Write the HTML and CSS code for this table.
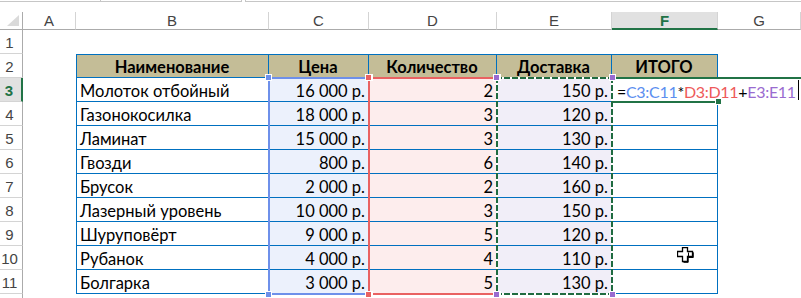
FILE: index.html
```html
<!DOCTYPE html>
<html lang="ru">
<head>
<meta charset="utf-8">
<title>Excel</title>
<link rel="stylesheet" href="styles.css">
</head>
<body>
<div class="sheet">
  <div class="grid">
    <div class="topbar"><div class="namebox"></div><div class="fxbox"></div><div class="formulabox"></div></div>

    <div class="corner"><span class="tri"></span></div>
    <div class="ch">A</div>
    <div class="ch">B</div>
    <div class="ch">C</div>
    <div class="ch">D</div>
    <div class="ch">E</div>
    <div class="ch sel">F</div>
    <div class="ch">G</div>

    <div class="rh">1</div>
    <div class="c"></div><div class="c"></div><div class="c"></div><div class="c"></div><div class="c"></div><div class="c"></div><div class="c"></div>

    <div class="rh">2</div>
    <div class="c"></div>
    <div class="t hd first">Наименование</div>
    <div class="t hd">Цена</div>
    <div class="t hd">Количество</div>
    <div class="t hd">Доставка</div>
    <div class="t hd">ИТОГО</div>
    <div class="c"></div>

    <div class="rh sel">3</div>
    <div class="c"></div>
    <div class="t first">Молоток отбойный</div>
    <div class="t num bc">16 000 р.</div>
    <div class="t num bd">2</div>
    <div class="t num be">150 р.</div>
    <div class="t"></div>
    <div class="c"></div>

    <div class="rh">4</div>
    <div class="c"></div>
    <div class="t first">Газонокосилка</div>
    <div class="t num bc">18 000 р.</div>
    <div class="t num bd">3</div>
    <div class="t num be">120 р.</div>
    <div class="t"></div>
    <div class="c"></div>

    <div class="rh">5</div>
    <div class="c"></div>
    <div class="t first">Ламинат</div>
    <div class="t num bc">15 000 р.</div>
    <div class="t num bd">3</div>
    <div class="t num be">130 р.</div>
    <div class="t"></div>
    <div class="c"></div>

    <div class="rh">6</div>
    <div class="c"></div>
    <div class="t first">Гвозди</div>
    <div class="t num bc">800 р.</div>
    <div class="t num bd">6</div>
    <div class="t num be">140 р.</div>
    <div class="t"></div>
    <div class="c"></div>

    <div class="rh">7</div>
    <div class="c"></div>
    <div class="t first">Брусок</div>
    <div class="t num bc">2 000 р.</div>
    <div class="t num bd">2</div>
    <div class="t num be">160 р.</div>
    <div class="t"></div>
    <div class="c"></div>

    <div class="rh">8</div>
    <div class="c"></div>
    <div class="t first">Лазерный уровень</div>
    <div class="t num bc">10 000 р.</div>
    <div class="t num bd">3</div>
    <div class="t num be">150 р.</div>
    <div class="t"></div>
    <div class="c"></div>

    <div class="rh">9</div>
    <div class="c"></div>
    <div class="t first">Шуруповёрт</div>
    <div class="t num bc">9 000 р.</div>
    <div class="t num bd">5</div>
    <div class="t num be">120 р.</div>
    <div class="t"></div>
    <div class="c"></div>

    <div class="rh">10</div>
    <div class="c"></div>
    <div class="t first">Рубанок</div>
    <div class="t num bc">4 000 р.</div>
    <div class="t num bd">4</div>
    <div class="t num be">110 р.</div>
    <div class="t"></div>
    <div class="c"></div>

    <div class="rh">11</div>
    <div class="c"></div>
    <div class="t first">Болгарка</div>
    <div class="t num bc">3 000 р.</div>
    <div class="t num bd">5</div>
    <div class="t num be">130 р.</div>
    <div class="t"></div>
    <div class="c"></div>

    <div class="rh last"></div>
    <div class="c"></div><div class="c"></div><div class="c"></div><div class="c"></div><div class="c"></div><div class="c"></div><div class="c"></div>
  </div>

  <div class="overlay">
    <div class="editor"><span class="op">=</span><span class="rc">C3:C11</span><span class="op">*</span><span class="rd">D3:D11</span><span class="op">+</span><span class="re">E3:E11</span><span class="caret"></span></div>
    <div class="active"><span class="fill"></span></div>
    <div class="rng rng-c"><span class="h tl"></span><span class="h tr"></span><span class="h bl"></span><span class="h br"></span></div>
    <div class="rng rng-d"><span class="h tl"></span><span class="h tr"></span><span class="h bl"></span><span class="h br"></span></div>
    <div class="rng rng-e"><span class="h tl"></span><span class="h tr"></span><span class="h bl"></span><span class="h br"></span></div>
    <div class="cursorcell">
      <svg class="cursor" width="17" height="16" viewBox="0 0 17 16">
        <path d="M5.5 0.5 H10.5 V4.5 H15.5 V9.5 H10.5 V14.5 H5.5 V9.5 H0.5 V4.5 H5.5 Z" fill="#fff" stroke="#000" stroke-width="1.3"/>
        <path d="M11.5 5.5 V10.5 M6.5 15.3 H11.2 V10.5 H16.3 V5.3" fill="none" stroke="#000" stroke-width="1"/>
      </svg>
    </div>
  </div>
</div>
</body>
</html>
```

FILE: styles.css
```css
* { box-sizing: border-box; }
html, body { margin: 0; padding: 0; background: #fff; }
body {
  width: 801px;
  height: 298px;
  overflow: hidden;
  font-family: "Liberation Sans", Arial, sans-serif;
}
.sheet { position: relative; width: 801px; height: 298px; overflow: hidden; }

.grid, .overlay {
  display: grid;
  grid-template-columns: 23px 53px 193px 100px 128px 115px 106px 83px;
  grid-template-rows: 12px 18px repeat(11, 24px) 4px;
}
.overlay { position: absolute; inset: 0; pointer-events: none; }

/* strip of the formula bar above the sheet */
.topbar { grid-column: 1 / -1; display: flex; align-items: flex-start; }
.namebox { width: 101px; height: 2px; border-right: 1px solid #c6c6c6; border-bottom: 1px solid #c6c6c6; }
.fxbox { width: 141px; height: 2px; border-right: 1px solid #c6c6c6; border-bottom: 1px solid #c6c6c6; }
.formulabox { flex: 1; height: 2px; margin-left: 3px; border-left: 1px solid #c6c6c6; border-bottom: 1px solid #c6c6c6; }

/* headers */
.corner {
  border-right: 1px solid #ababab;
  border-bottom: 1px solid #ababab;
  display: flex; justify-content: flex-end; align-items: flex-end;
  padding: 0 3px 3px 0;
}
.tri { width: 12px; height: 11px; background: #dadada; clip-path: polygon(100% 0, 100% 100%, 0 100%); }

.ch {
  display: flex; align-items: center; justify-content: center;
  border-right: 1px solid #d4d4d4;
  border-bottom: 1px solid #ababab;
  color: #444;
  font-size: 15px;
}
.ch.sel {
  background: #e1e1e1;
  border-bottom: 2px solid #217346;
  color: #217346;
  font-weight: bold;
}

.rh {
  display: flex; align-items: flex-end; justify-content: center;
  padding: 0 3px 2px 0;
  border-right: 1px solid #ababab;
  border-bottom: 1px solid #d4d4d4;
  color: #444;
  font-size: 15px;
}
.rh.sel {
  background: #e1e1e1;
  border-right: 2px solid #217346;
  color: #217346;
  font-weight: bold;
}
.rh.last { border-bottom: 0; }

/* table cells */
.t {
  display: flex; align-items: flex-end;
  padding: 0 4px 0 3px;
  border-right: 1px solid #0070c0;
  border-bottom: 1px solid #0070c0;
  color: #000;
  font-family: Lato, "Liberation Sans", sans-serif;
  font-size: 16.5px;
  line-height: 19px;
  white-space: nowrap;
}
.t.first { border-left: 1px solid #0070c0; }
.t.hd {
  border-top: 1px solid #0070c0;
  background: #c4bd97;
  font-weight: bold;
  justify-content: center;
}
.t.num { justify-content: flex-end; padding-right: 3px; }
.bc { background: #ecf1fc; }
.bd { background: #fdeded; }
.be { background: #f1eef8; }

/* formula editor in F3 */
.editor {
  grid-column: 7 / 9; grid-row: 5;
  margin-top: -1px;
  background: #fff;
  border-top: 2px solid #217346;
  display: flex; align-items: flex-end;
  padding: 0 0 1px 5px;
  font-family: Lato, "Liberation Sans", sans-serif;
  font-size: 16px;
  letter-spacing: -0.3px;
  line-height: 19px;
  white-space: nowrap;
  color: #000;
}
.rc { color: #5b8ef0; }
.rd { color: #ee5a5a; }
.re { color: #9a6bd0; }
.caret { align-self: center; width: 1px; height: 20px; background: #000; margin-left: 2px; }

.active {
  grid-column: 7; grid-row: 5;
  margin-bottom: -1px;
  border-bottom: 2px solid #217346;
  position: relative;
}
.fill {
  position: absolute; right: -4px; bottom: -4px;
  width: 7px; height: 7px;
  background: #217346;
  border: 1px solid #fff;
}

/* coloured reference ranges */
.rng { grid-row: 5 / 14; position: relative; margin: -1px -1px -1px -1px; border: 2px solid; }
.rng-c { grid-column: 4; border-color: #6e90ea; }
.rng-d { grid-column: 5; border-color: #e96262; }
.rng-e { grid-column: 6; border-color: #fff; }
.rng-e::after {
  content: "";
  position: absolute; inset: -2px;
  background:
    repeating-linear-gradient(90deg, #1f6b40 0 6px, transparent 6px 8px) left top / 100% 2px no-repeat,
    repeating-linear-gradient(90deg, #1f6b40 0 6px, transparent 6px 8px) left bottom / 100% 2px no-repeat,
    repeating-linear-gradient(180deg, #1f6b40 0 6px, transparent 6px 8px) left top / 2px 100% no-repeat,
    repeating-linear-gradient(180deg, #1f6b40 0 6px, transparent 6px 8px) right top / 2px 100% no-repeat;
}
.h {
  position: absolute;
  width: 7px; height: 7px;
  border: 1px solid #fff;
  z-index: 2;
}
.rng-c .h { background: #6e90ea; }
.rng-d .h { background: #e96262; }
.rng-e .h { background: #9a6bd0; }
.h.tl { left: -5px; top: -5px; }
.h.tr { right: -5px; top: -5px; }
.h.bl { left: -5px; bottom: -5px; }
.h.br { right: -5px; bottom: -5px; }

.cursorcell { grid-column: 7; grid-row: 12; position: relative; }
.cursor { position: absolute; left: 65px; top: 1px; }
```
